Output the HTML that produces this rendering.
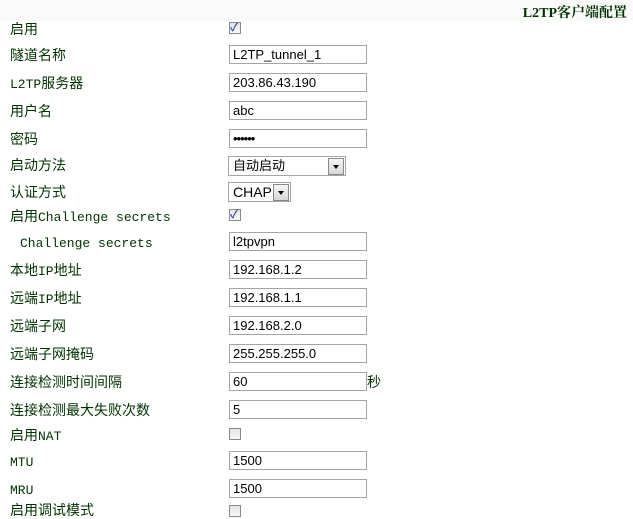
<!DOCTYPE html>
<html><head><meta charset="utf-8"><style>
body{margin:0;width:633px;height:508px;background:#fff;position:relative;overflow:hidden;font-family:"Liberation Sans","Noto Sans CJK SC",sans-serif;}
.hd{position:absolute;left:0;top:0;width:633px;height:21px;background:#fafafa;}
.tt{position:absolute;right:6px;top:2px;font-family:"Liberation Serif","Noto Serif CJK SC",serif;font-weight:bold;font-size:14px;color:#003300;}
.l{position:absolute;left:10px;font-size:14px;color:#003300;line-height:18px;white-space:nowrap;}
.m{font-family:"Liberation Mono",monospace;font-size:13px;}
.i{position:absolute;left:229px;width:133px;height:17px;border:1px solid #a5a5a5;font-size:13px;color:#000;line-height:18px;padding-left:3px;box-sizing:content-box;}
.c{position:absolute;left:229px;width:10px;height:10px;border:1px solid #8a8a8a;background:linear-gradient(#e4e4e4,#f8f8f8);}
.c.k::after{content:"✓";position:absolute;left:0;top:-4px;font-size:11px;color:#3a4fa0;font-weight:bold;}
.s{position:absolute;left:228px;height:18px;border:1px solid #a5a5a5;font-size:13px;line-height:18px;padding-left:4px;box-sizing:content-box;}
.a{position:absolute;right:1px;top:1px;width:14px;height:15px;border:1px solid #888;background:linear-gradient(#f4f4f4,#d8d8d8);}
.a::after{content:"";position:absolute;left:4px;top:6px;border-left:3px solid transparent;border-right:3px solid transparent;border-top:4px solid #000;}
</style></head><body>
<div class="hd"></div><div class="tt">L2TP客户端配置</div>
<div class="l" style="top:20px">启用</div><div class="c k" style="top:22px"></div>
<div class="l" style="top:46px">隧道名称</div><div class="i" style="top:45px">L2TP_tunnel_1</div>
<div class="l" style="top:74px"><span class="m">L2TP</span>服务器</div><div class="i" style="top:73px">203.86.43.190</div>
<div class="l" style="top:102px">用户名</div><div class="i" style="top:101px">abc</div>
<div class="l" style="top:130px">密码</div><div class="i" style="top:129px;letter-spacing:-1px">••••••</div>
<div class="l" style="top:156px">启动方法</div><div class="s" style="top:156px;width:112px">自动启动<div class="a"></div></div>
<div class="l" style="top:183px">认证方式</div><div class="s" style="top:182px;width:57px;font-size:14px">CHAP<div class="a"></div></div>
<div class="l" style="top:207px">启用<span class="m">Challenge secrets</span></div><div class="c k" style="top:209px"></div>
<div class="l" style="top:233px;left:20px"><span class="m">Challenge secrets</span></div><div class="i" style="top:232px">l2tpvpn</div>
<div class="l" style="top:261px">本地<span class="m">IP</span>地址</div><div class="i" style="top:260px">192.168.1.2</div>
<div class="l" style="top:289px">远端<span class="m">IP</span>地址</div><div class="i" style="top:288px">192.168.1.1</div>
<div class="l" style="top:317px">远端子网</div><div class="i" style="top:316px">192.168.2.0</div>
<div class="l" style="top:345px">远端子网掩码</div><div class="i" style="top:344px">255.255.255.0</div>
<div class="l" style="top:373px">连接检测时间间隔</div><div class="i" style="top:372px">60</div><div class="l" style="top:373px;left:367px">秒</div>
<div class="l" style="top:401px">连接检测最大失败次数</div><div class="i" style="top:400px">5</div>
<div class="l" style="top:426px">启用<span class="m">NAT</span></div><div class="c" style="top:428px"></div>
<div class="l" style="top:452px"><span class="m">MTU</span></div><div class="i" style="top:451px">1500</div>
<div class="l" style="top:480px"><span class="m">MRU</span></div><div class="i" style="top:479px">1500</div>
<div class="l" style="top:501px">启用调试模式</div><div class="c" style="top:505px"></div>
</body></html>
